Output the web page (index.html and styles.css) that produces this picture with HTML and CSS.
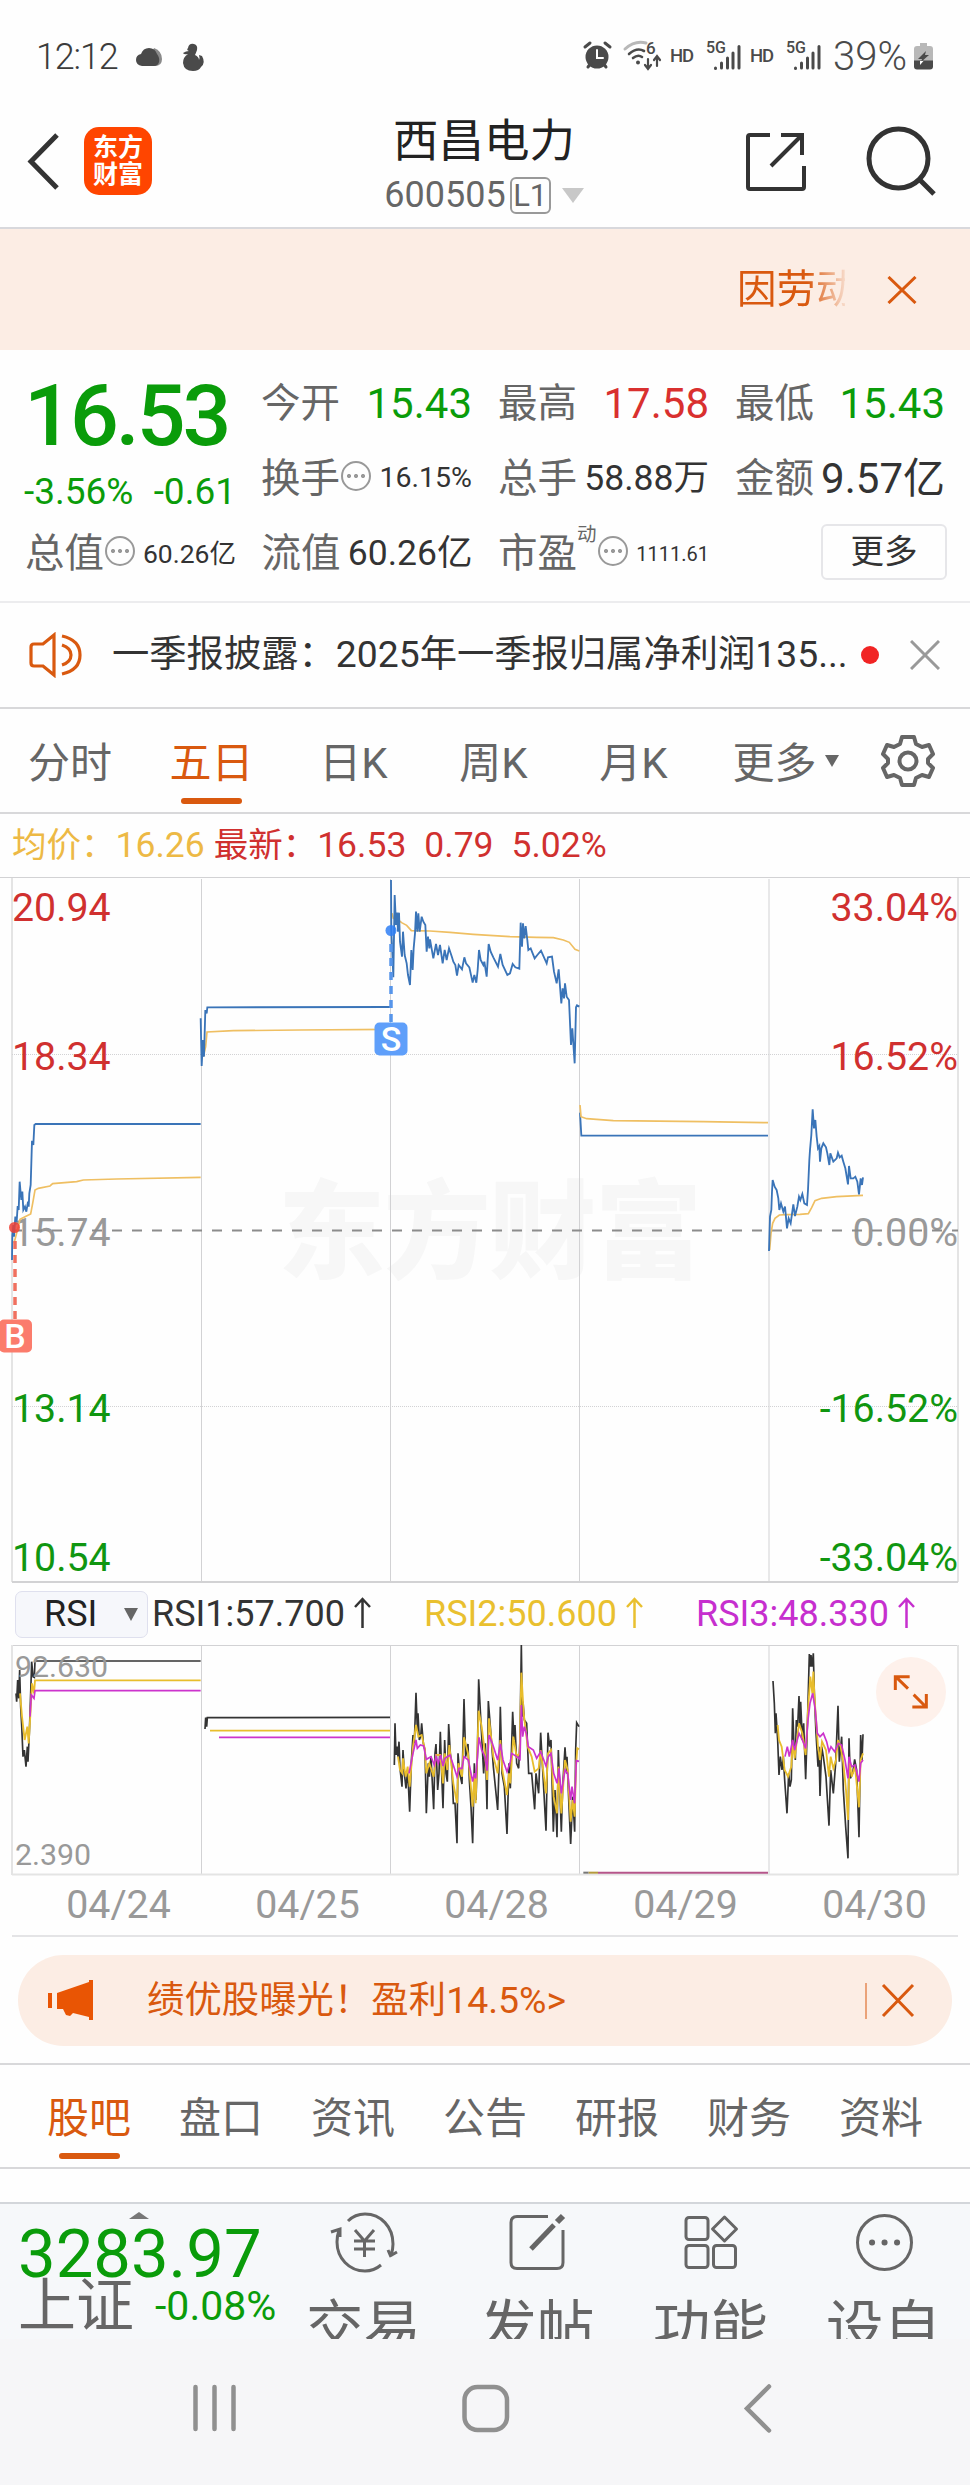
FILE: index.html
```html
<!DOCTYPE html>
<html lang="zh-CN">
<head>
    <meta charset="UTF-8">
    <meta name="viewport" content="width=device-width, initial-scale=1.0">
    <title>西昌电力 600505</title>
    <link rel="stylesheet" href="styles.css">
</head>
<body>
    <!-- Status bar -->
    <div class="status-bar">
        <span class="clock">12:12</span>
        <svg class="status-left" width="70" height="30" viewBox="0 0 70 30">
            <path d="M18 6q8 3 8 11q0 7-7 7h-9z" fill="#8a8a8a"/>
            <path d="M6 24q-6-1-6-6q0-5 5-6q2-6 8-6q6 0 8 6q3 4 2 8q-1 4-5 4z" fill="#4a4a4a"/>
            <path d="M52 6q1-5 6-4q4 1 3 6q-1 3-2 5q4 2 4 5q1-2 0-5l3 1q4 7-1 11q-2 4-8 4q-9 0-10-8q0-6 5-9q-4 1-5-1q3-2 6-2q-3-1-1-3z" fill="#4a4a4a"/>
        </svg>
        <div class="status-right">
            <svg width="374" height="40" viewBox="580 38 374 40">
                <g fill="none" stroke="#4a4a4a" stroke-width="3" stroke-linecap="round">
                    <circle cx="597" cy="58" r="11.5" fill="#4a4a4a" stroke="none"/>
                    <path d="M585 48l5-4M610 48l-5-4M588 68l3-4M606 68l-3-4"/>
                    <path d="M597 51v8h6" stroke="#fff" stroke-width="2"/>
                    <path d="M625 50q10-9 21-6" stroke="#b8b8b8"/>
                    <path d="M629 55q8-7 15-3M633 59q5-4 9-1" stroke-width="2.6"/>
                    <circle cx="638" cy="63.5" r="2" fill="#4a4a4a" stroke="none"/>
                    <path d="M648 60v9M645 66l3 4l3-4M657 67v-9M654 61l3-4l3 4" stroke-width="2.2"/>
                    <path d="M715.500 69v.5M721.500 64v5M727.500 59v10M733 54v15M739 47.500v21.500"/>
                    <path d="M795.500 69v.5M801.500 64v5M807.500 59v10M813 54v15M819 47.500v21.500"/>
                </g>
                <g class="status-text">
                    <text x="646" y="55" font-size="17">6</text>
                    <text x="670" y="62.500" font-size="18.500" textLength="24">HD</text>
                    <text x="706" y="54" font-size="16" textLength="20">5G</text>
                    <text x="750" y="62.500" font-size="18.500" textLength="24">HD</text>
                    <text x="786" y="54" font-size="16" textLength="20">5G</text>
                </g>
                <text class="battery-text" x="833" y="70.500">39%</text>
                <path d="M920 44h7v3h3q3 0 3 3v12h-19v-12q0-3 3-3h3z" fill="#b8b8b8"/>
                <path d="M914 61.500h19v6q0 3-3 3h-13q-3 0-3-3z" fill="#4a4a4a"/>
                <path d="M926 52l-8 8h4l-1 3l8-7h-4z" fill="#4a4a4a"/>
                <path d="M920 62h3.500l-3.500 4z" fill="#fff"/>
            </svg>
        </div>
    </div>

    <!-- Title -->
    <header class="header">
        <svg class="back" width="36" height="60" viewBox="0 0 36 60"><path d="M32 4L6 30.500L32 57" fill="none" stroke="#333" stroke-width="5"/></svg>
        <div class="logo"><span>东方</span><span>财富</span></div>
        <div class="stock">
            <h1>西昌电力</h1>
            <div class="code">600505<span class="level">L1</span><i class="tri-down"></i></div>
        </div>
        <svg class="header-icons" width="200" height="72" viewBox="740 124 200 72">
            <g fill="none" stroke="#333" stroke-width="4">
                <path d="M770 134h-20q-2 0-2 2v50q0 2 2 2h52q2 0 2-2v-21"/>
                <path d="M781 134h21v20M802 134l-31 31"/>
                <circle cx="898.500" cy="157.500" r="29.500" stroke-width="5"/>
                <path d="M919 178l15 15" stroke-width="5"/>
            </g>
        </svg>
    </header>

    <div class="notice">
        <span class="notice-text">因劳动</span>
        <svg width="30" height="28" viewBox="0 0 30 28"><path d="M1.500 1L28.500 27M28.500 1L1.500 27" stroke="#d9590f" stroke-width="3"/></svg>
    </div>

    <!-- Quote -->
    <section class="quote">
        <div class="price-box">
            <div class="price">16.53</div>
            <div class="change"><span>-3.56%</span><span>-0.61</span></div>
        </div>
        <div class="stats">
            <div class="stat"><label>今开</label><b class="green">15.43</b></div>
            <div class="stat"><label>最高</label><b class="red">17.58</b></div>
            <div class="stat"><label>最低</label><b class="green">15.43</b></div>
            <div class="stat"><label>换手</label><i class="dots"></i><b class="s28">16.15%</b></div>
            <div class="stat"><label>总手</label><b class="s35">58.88万</b></div>
            <div class="stat"><label>金额</label><b>9.57亿</b></div>
        </div>
        <div class="stats-bottom">
            <div class="stat"><label>总值</label><i class="dots"></i><b class="s26">60.26亿</b></div>
            <div class="stat"><label>流值</label><b class="s35">60.26亿</b></div>
            <div class="stat"><label>市盈</label><sup>动</sup><i class="dots"></i><b class="s20">1111.61</b></div>
            <button class="more">更多</button>
        </div>
    </section>

    <div class="news">
        <svg width="56" height="46" viewBox="0 0 56 46">
            <g fill="none" stroke="#d9590f" stroke-width="3.200">
                <path d="M5 12h9L25 3v40L14 34H5q-3 0-3-3V15q0-3 3-3z"/>
                <path d="M33 4q18 4 18 19t-18 19M33 13q9 3 9 10t-9 10"/>
            </g>
        </svg>
        <span class="news-text">一季报披露：2025年一季报归属净利润135...</span>
        <i class="red-dot"></i>
        <svg class="close" width="30" height="30" viewBox="0 0 30 30"><path d="M1 1L29 29M29 1L1 29" stroke="#999" stroke-width="3"/></svg>
    </div>

    <nav class="period">
        <span>分时</span>
        <span class="active">五日</span>
        <span>日K</span>
        <span>周K</span>
        <span>月K</span>
        <span class="period-more">更多<i></i></span>
        <svg width="54" height="54" viewBox="-27 -27 54 54">
            <g fill="none" stroke="#666" stroke-width="4" stroke-linejoin="round">
                <path d="M-6-24H6L8-17L14-14L21-16L25-7L20-2V2L25 7L21 16L14 14L8 17L6 24H-6L-8 17L-14 14L-21 16L-25 7L-20 2V-2L-25-7L-21-16L-14-14L-8-17Z"/>
                <circle r="8.500"/>
            </g>
        </svg>
    </nav>

    <div class="legend">
        <span class="avg">均价：<b>16.26</b></span><span class="last">最新：<b>16.53</b></span><b class="diff">0.79</b><b>5.02%</b>
    </div>

    <!-- Five day price chart -->
    <svg class="chart" width="970" height="706" viewBox="0 877 970 706">
        <text class="watermark" x="278" y="1270" textLength="424">东方财富</text>
        <g class="grid">
            <path d="M0 877.500H970"/>
            <path d="M12 878V1582M958 878V1582" stroke="#e4e4e4" stroke-width="2"/>
            <path d="M201.500 879V1582M390.500 879V1582M579.500 879V1582M769 879V1582"/>
            <path d="M12 1054.500H958M12 1406.500H958" stroke-dasharray="1 1"/>
            <path d="M12 1582H958" stroke-width="2"/>
        </g>
        <g class="axis">
            <text class="up" x="12" y="921">20.94</text>
            <text class="up" x="12" y="1070">18.34</text>
            <text class="flat" x="12" y="1246">15.74</text>
            <text class="down" x="12" y="1422">13.14</text>
            <text class="down" x="12" y="1571">10.54</text>
        </g>
        <g class="axis end">
            <text class="up" x="958" y="921">33.04%</text>
            <text class="up" x="958" y="1070">16.52%</text>
            <text class="flat" x="958" y="1246">0.00%</text>
            <text class="down" x="958" y="1422">-16.52%</text>
            <text class="down" x="958" y="1571">-33.04%</text>
        </g>
        <path d="M12 1230.500H958" stroke="#8c8c8c" stroke-width="2" stroke-dasharray="10 10"/>
        <!-- 04/24, 04/25 -->
        <g class="lines" transform="translate(0 870) scale(.33333)">
            <polyline class="avg-line" points="42,1120 55,1070 60,1048 75,1040 92,1032 98,1000 105,960 115,955 150,948 158,941 230,935 250,930 350,927 602,922"/>
            <polyline class="price-line" points="36,1170 37,1095 40,1065 42,1100 46,1040 50,1055 53,1008 56,1020 59,935 62,970 64,990 67,965 70,1020 75,1010 79,1025 84,995 86,1010 88,970 92,945 94,880 96,812 100,825 103,765 107,762 602,762"/>
            <polyline class="avg-line" points="610,560 617,530 621,486 700,482 900,480 1170,478"/>
            <polyline class="price-line" points="602,445 605,588 609,510 612,560 616,420 620,430 622,412 1171,411"/>
        </g>
        <!-- 04/28 -->
        <g class="lines" transform="translate(370 870) scale(.33333)">
            <polyline class="avg-line" points="66,130 70,145 85,150 95,158 110,166 124,182 180,183 240,187 310,193 420,200 500,202 550,203 580,210 598,217 615,238 628,243"/>
            <polyline class="price-line" points="63,30 64,180 70,322 74,75 78,165 81,128 84,185 87,128 90,215 96,260 99,185 104,255 110,280 114,315 120,345 124,240 128,300 131,235 135,190 138,125 142,185 145,130 149,185 155,140 160,155 166,165 170,245 174,200 178,235 180,208 190,265 198,222 204,255 210,225 218,280 224,240 230,270 237,235 246,262 250,275 256,285 261,317 266,285 276,298 283,262 288,280 298,292 308,338 313,315 319,338 323,300 327,240 332,270 340,285 343,275 350,320 356,222 362,245 370,262 384,290 391,252 398,285 412,315 420,310 428,282 436,292 448,296 452,158 456,230 459,160 463,205 467,168 472,210 475,240 482,235 494,265 502,255 513,242 530,280 534,262 546,260 552,305 560,340 566,298 574,400 578,355 582,385 585,340 590,380 597,390 603,525 607,475 614,580 618,412 621,406 628,410"/>
        </g>
        <!-- 04/29, 04/30 -->
        <g class="lines" transform="translate(570 870) scale(.33333)">
            <polyline class="price-line" points="30,728 34,797 594,797"/>
            <polyline class="avg-line" points="30,705 33,740 50,746 130,752 400,755 594,758"/>
            <polyline class="avg-line" points="599,1140 603,1090 608,1060 615,1045 628,1035 650,1034 690,1033 715,1031 725,1013 735,992 755,985 800,980 879,976"/>
            <polyline class="price-line" points="597,1143 600,1040 604,1020 606,965 608,930 614,950 620,960 625,985 628,1020 633,1000 640,1025 645,1010 651,1075 656,1045 662,1060 670,1003 675,1038 682,1010 687,980 691,990 697,972 703,1000 711,1005 714,960 718,870 720,840 724,795 728,718 732,775 736,750 740,800 744,835 748,828 750,875 754,835 760,820 768,832 772,850 778,885 781,850 790,875 800,865 804,848 809,862 815,857 820,875 826,895 834,943 837,888 842,925 850,925 856,920 862,935 867,973 872,925 876,945 879,922"/>
        </g>
        <!-- Buy / sell marks -->
        <circle cx="14.500" cy="1227.500" r="5.500" fill="#ee4034" opacity=".85"/>
        <path d="M15 1241V1319" stroke="#f0705f" stroke-width="3.500" stroke-dasharray="8 6"/>
        <rect x="-1" y="1319.500" width="33" height="33" rx="5" fill="#fb7c6c"/>
        <text class="mark" x="15" y="1348">B</text>
        <circle cx="391" cy="930.500" r="5.500" fill="#2f7ff5" opacity=".85"/>
        <path d="M391 944V1022" stroke="#5795ea" stroke-width="3.500" stroke-dasharray="8 6"/>
        <rect x="374.500" y="1022.500" width="33" height="33" rx="5" fill="#5f9ffa"/>
        <text class="mark" x="391" y="1051">S</text>
    </svg>

    <div class="rsi-head">
        <div class="rsi-select">RSI<i></i></div>
        <span class="rsi1">RSI1:57.700<svg width="17" height="32" viewBox="0 0 17 32"><path d="M8.500 31V2M1 10L8.500 2L16 10"/></svg></span>
        <span class="rsi2">RSI2:50.600<svg width="17" height="32" viewBox="0 0 17 32"><path d="M8.500 31V2M1 10L8.500 2L16 10"/></svg></span>
        <span class="rsi3">RSI3:48.330<svg width="17" height="32" viewBox="0 0 17 32"><path d="M8.500 31V2M1 10L8.500 2L16 10"/></svg></span>
    </div>

    <!-- RSI chart -->
    <svg class="chart" width="970" height="231" viewBox="0 1645 970 231">
        <g class="grid">
            <path d="M12 1645.500H958M201.500 1645V1875M390.500 1645V1875M579.500 1645V1875M769 1645V1875"/>
            <path d="M12 1645V1875M958 1645V1875M12 1874.500H958" stroke="#e4e4e4" stroke-width="2"/>
        </g>
        <g class="rsi-lines" transform="translate(0 1560) scale(.33333)">
            <polyline class="k" points="48,400 50,425 53,360 56,415 59,330 62,440 65,495 69,590 73,570 78,620 82,560 84,605 88,520 92,400 95,305 99,350 103,352 105,303 602,303"/>
            <polyline class="y" points="60,400 66,470 74,540 82,500 86,550 92,450 96,370 102,400 105,361 602,361"/>
            <polyline class="m" points="90,470 94,405 102,415 105,392 602,392"/>
            <polyline class="k" points="615,507 617,473 620,500 622,473 1170,472"/>
            <polyline class="y" points="630,512 1170,512"/>
            <polyline class="m" points="657,532 1170,532"/>
        </g>
        <g class="rsi-lines" transform="translate(385 1640) scale(.33333)">
            <polyline class="k" points="28,375 30,250 33,345 36,320 39,350 42,305 45,385 51,440 54,330 58,400 63,445 68,390 74,515 79,365 84,285 88,310 93,158 97,270 99,220 103,300 107,290 110,250 115,310 120,330 124,520 130,370 133,410 138,350 146,508 150,340 153,312 158,450 162,400 166,275 170,400 174,505 179,300 183,400 187,425 191,252 196,340 200,370 205,490 210,490 216,610 219,340 224,400 231,432 237,177 242,350 249,312 253,420 258,500 263,610 268,370 273,480 277,350 281,118 288,250 296,400 301,310 306,508 310,183 316,260 325,380 338,510 343,350 346,200 351,400 358,440 366,582 372,370 376,445 383,215 387,300 390,255 395,370 401,385 405,300 409,15 412,230 414,185 418,240 425,250 431,400 440,400 449,508 453,400 461,460 467,278 472,370 483,572 489,278 494,320 498,300 505,575 510,450 516,592 520,330 529,575 533,440 540,322 545,400 546,350 552,500 557,612 563,470 569,575 572,330 575,248 582,260"/>
            <polyline class="y" points="39,350 45,390 52,400 54,355 62,410 68,380 74,440 84,320 93,255 100,290 110,285 120,330 124,400 133,370 146,410 153,345 166,345 174,430 179,340 187,390 193,315 205,430 216,490 220,370 231,410 237,292 249,340 263,500 268,400 272,490 281,212 290,260 300,340 306,420 312,235 325,350 338,400 346,300 352,390 366,465 372,400 376,430 385,290 395,350 404,340 409,98 416,220 428,320 440,350 449,395 461,385 467,330 483,460 489,340 498,330 506,470 516,520 520,380 529,520 540,360 548,390 557,545 563,480 569,530 573,380 577,325 582,328"/>
            <polyline class="m" points="72,400 78,370 84,340 93,300 97,325 106,315 116,318 124,358 138,350 148,375 153,350 160,370 167,345 174,378 180,355 195,345 208,385 216,410 222,385 231,385 237,350 250,360 263,425 268,400 272,415 282,292 290,330 300,350 306,392 312,285 322,310 338,360 346,312 354,360 366,395 376,365 380,340 395,350 405,358 409,195 413,290 418,260 424,280 430,320 445,330 455,355 467,335 483,378 490,350 498,340 506,400 516,430 522,385 529,460 540,390 548,400 557,480 561,440 569,490 574,362 582,364"/>
        </g>
        <g class="rsi-lines" transform="translate(480 1560) scale(.33333)">
            <path d="M310 938H326" stroke="#777" stroke-width="6"/>
            <path d="M326 938H354" stroke="#b59a3c" stroke-width="6"/>
            <path d="M354 938H864" stroke="#b5568a" stroke-width="6"/>
            <polyline class="k" points="879,363 883,430 886,520 888,460 893,540 897,645 901,590 906,630 910,590 914,660 921,760 926,640 930,680 934,660 938,445 942,560 946,600 949,480 953,500 957,408 960,500 962,425 967,540 971,490 977,658 982,500 988,282 991,320 993,285 996,320 1000,280 1003,400 1008,520 1014,620 1017,560 1020,708 1025,560 1030,590 1038,650 1047,797 1052,630 1060,700 1067,610 1074,437 1078,605 1085,530 1090,690 1097,800 1104,895 1107,535 1111,655 1118,640 1124,598 1130,630 1137,832 1142,525 1146,600 1149,523"/>
            <polyline class="y" points="893,495 897,540 905,560 914,630 924,650 934,620 938,545 944,595 957,490 967,520 977,585 984,450 991,350 997,400 1000,335 1004,420 1014,560 1020,600 1026,545 1038,570 1047,650 1052,590 1060,625 1068,600 1074,540 1082,560 1090,610 1098,690 1104,780 1108,600 1115,650 1125,620 1137,742 1142,600 1149,580"/>
            <polyline class="m" points="915,590 922,560 928,590 938,540 944,570 957,520 967,540 977,565 984,480 990,430 998,400 1006,450 1012,520 1020,530 1030,520 1040,545 1047,575 1053,560 1064,575 1075,550 1085,555 1095,600 1104,655 1107,590 1115,620 1125,615 1137,665 1142,610 1149,600"/>
            <circle cx="1293" cy="396" r="105" fill="#fef1eb"/>
            <path d="M1284 386L1247 350M1246 390V350H1289M1301 404L1338 441M1297 441H1339V402" stroke="#d9590f" stroke-width="9"/>
        </g>
        <text class="rsi-axis" x="15" y="1677">92.630</text>
        <text class="rsi-axis" x="15" y="1865">2.390</text>
    </svg>

    <div class="dates">
        <span>04/24</span><span>04/25</span><span>04/28</span><span>04/29</span><span>04/30</span>
    </div>

    <div class="promo">
        <svg width="48" height="42" viewBox="0 0 48 42">
            <path d="M0 13h4v15H0zM9 13L41 2V0h4v40h-4v-3L25 33l-3 3l-4-1l-3-6H9z" fill="#e95504"/>
        </svg>
        <span class="promo-text">绩优股曝光！盈利14.5%&gt;</span>
        <svg class="promo-close" width="50" height="38" viewBox="0 0 50 38">
            <path d="M1 1V37" stroke="#d9590f"/>
            <path d="M18 3L48 34M48 3L18 34" stroke="#d9590f" stroke-width="3"/>
        </svg>
    </div>

    <nav class="sections">
        <span class="active">股吧</span>
        <span>盘口</span>
        <span>资讯</span>
        <span>公告</span>
        <span>研报</span>
        <span>财务</span>
        <span>资料</span>
    </nav>

    <footer class="bottom">
        <div class="index">
            <i class="tri-up"></i>
            <div class="index-value">3283.97</div>
            <div class="index-row"><span>上证</span><b>-0.08%</b></div>
        </div>
        <div class="action">
            <svg width="70" height="62" viewBox="329 2211 70 62">
                <path d="M348 2221q7-7 17-7c16 0 28 13 28 30q0 6-2 11M391 2257l-3-7M390 2256l7-4M381 2265q-7 6-16 6c-16 0-28-13-28-29q0-6 2-12M331 2232l9-3v8"/>
                <path d="M355 2230l9.500 11l9.500-11M364.500 2241v16M354 2241h21M354 2249h21"/>
            </svg>
            <span>交易</span>
        </div>
        <div class="action">
            <svg width="60" height="62" viewBox="507 2211 60 62">
                <path d="M548 2216.500H517q-6 0-6 6v40q0 6 6 6h40q6 0 6-6V2230"/>
                <path d="M531 2249L554 2225" stroke-width="5"/>
                <path d="M557 2222l6-6" stroke-width="6"/>
            </svg>
            <span>发帖</span>
        </div>
        <div class="action">
            <svg width="60" height="62" viewBox="681 2211 60 62">
                <rect x="686" y="2217.500" width="22" height="22" rx="3"/>
                <rect x="686" y="2245.500" width="22" height="22" rx="3"/>
                <rect x="713.500" y="2245.500" width="22" height="22" rx="3"/>
                <path d="M724.500 2217l12 12l-12 12l-12-12z" stroke-linejoin="round"/>
            </svg>
            <span>功能</span>
        </div>
        <div class="action">
            <svg width="62" height="62" viewBox="852 2211 62 62">
                <circle cx="883.500" cy="2242.500" r="27"/>
                <path d="M871 2242.500h.1M883.500 2242.500h.1M896 2242.500h.1" stroke-width="6" stroke-linecap="round"/>
            </svg>
            <span>设自</span>
        </div>
    </footer>

    <div class="sys-nav">
        <svg width="970" height="60" viewBox="0 2378 970 60">
            <g fill="none" stroke="#909090" stroke-width="4.500" stroke-linecap="round">
                <path d="M195.500 2387V2429M214.500 2387V2429M233.500 2387V2429"/>
                <rect x="464.500" y="2387" width="42.500" height="43" rx="13"/>
                <path d="M769 2386.500L747 2408.500L769 2430.500"/>
            </g>
        </svg>
    </div>
</body>
</html>
```

FILE: styles.css
```css
* {
    box-sizing: border-box;
}

body {
    margin: 0;
    width: 970px;
    height: 2485px;
    overflow: hidden;
    background: #fefefe;
    color: #333;
    font-family: Roboto, "Noto Sans CJK SC", sans-serif;
    line-height: 1;
}

svg {
    display: block;
    flex: none;
}

i {
    font-style: normal;
}

.green {
    color: #0a9c0a;
}

.red {
    color: #d9302f;
}

/* Status bar */
.status-bar {
    display: flex;
    align-items: center;
    height: 114px;
    padding: 0 16px 0 36px;
}

.clock {
    width: 99px;
    font-size: 36px;
    font-weight: 300;
    letter-spacing: -1.2px;
    color: #3c3c3c;
}

.status-left {
    margin-left: 1px;
}

.status-right {
    margin-left: auto;
}

.status-text {
    fill: #4a4a4a;
    font-weight: 500;
}

.battery-text {
    fill: #4a4a4a;
    font-size: 40px;
    font-weight: 300;
}

/* Title */
.header {
    display: flex;
    align-items: center;
    height: 115px;
    padding: 0 30px 20px 25px;
    border-bottom: 2px solid #d8d8dc;
}

.back {
    margin-right: 23px;
}

.logo {
    display: flex;
    flex-direction: column;
    justify-content: center;
    gap: 2px;
    width: 68px;
    height: 68px;
    border-radius: 15px;
    background: #ff4500;
    color: #fff;
    font-size: 25px;
    font-weight: 700;
    text-align: center;
}

.stock {
    flex: 1;
    display: flex;
    flex-direction: column;
    align-items: center;
    padding: 11px 0 0 76px;
}

.stock h1 {
    margin: 0;
    font-size: 45.500px;
    font-weight: 400;
    color: #222;
}

.code {
    display: flex;
    align-items: center;
    margin-top: 13px;
    height: 36px;
    font-size: 36px;
    color: #666;
}

.level {
    width: 41px;
    height: 37px;
    margin-left: 4px;
    border: 2px solid #999;
    border-radius: 6px;
    font-size: 31px;
    line-height: 34px;
    text-align: center;
}

.tri-down {
    margin-left: 11px;
    border: 11px solid transparent;
    border-top: 15px solid #c8c8c8;
    border-bottom: 0;
}

/* Orange notice */
.notice {
    display: flex;
    align-items: center;
    height: 121px;
    padding: 0 53px 0 737px;
    background: #fcede4;
}

.notice-text {
    width: 108px;
    margin-right: 42px;
    overflow: hidden;
    white-space: nowrap;
    font-size: 39.500px;
    line-height: 50px;
    color: #d9590f;
    -webkit-mask-image: linear-gradient(to right, #000 65%, transparent 105%);
    mask-image: linear-gradient(to right, #000 65%, transparent 105%);
}

/* Quote */
.quote {
    display: grid;
    grid-template-columns: 236px 1fr;
    grid-template-rows: 150px 76px;
    column-gap: 25px;
    height: 253px;
    padding: 16px 25px 0 0;
    border-bottom: 2px solid #ececee;
}

.price-box {
    padding: 7px 0 0 24px;
    color: #0a9c0a;
}

.price {
    height: 86px;
    font-size: 86px;
    font-weight: 500;
    letter-spacing: -3px;
    line-height: 86px;
}

.change {
    display: flex;
    justify-content: space-between;
    padding: 14px 0 0;
    font-size: 37px;
}

.stats {
    display: grid;
    grid-template-columns: 211px 211px 210px;
    column-gap: 26px;
    grid-auto-rows: 75px;
}

.stats-bottom {
    grid-column: 1 / 3;
    display: grid;
    grid-template-columns: 211px 211px 211px 1fr;
    column-gap: 25.500px;
    height: 76px;
    padding-left: 25px;
}

.stat {
    display: flex;
    align-items: center;
    white-space: nowrap;
}

.stat label {
    font-size: 39.500px;
    color: #666;
}

.stat b {
    margin-left: auto;
    font-size: 42px;
    font-weight: 400;
}

.stat .s35 {
    font-size: 35.500px;
}

.stat .s28 {
    font-size: 28.500px;
}

.stat .s26 {
    font-size: 26.500px;
}

.stat .s20 {
    font-size: 20px;
}

.stat sup {
    align-self: flex-start;
    margin-top: 9px;
    font-size: 19.500px;
    color: #666;
}

.dots {
    width: 30px;
    height: 30px;
    margin: 0 0 6px 1px;
    border: 2px solid #999;
    border-radius: 50%;
    background:
        radial-gradient(circle at 6px 13px, #999 1.800px, transparent 2.300px),
        radial-gradient(circle at 13px 13px, #999 1.800px, transparent 2.300px),
        radial-gradient(circle at 20px 13px, #999 1.800px, transparent 2.300px);
}

.more {
    width: 126px;
    height: 56px;
    margin: 8px -2px 0 auto;
    padding: 0;
    border: 2px solid #e6e6e9;
    border-radius: 6px;
    background: #fefefe;
    color: #333;
    font: 33.500px Roboto, "Noto Sans CJK SC", sans-serif;
    line-height: 44px;
}

/* News line */
.news {
    display: flex;
    align-items: center;
    height: 106px;
    padding-left: 29px;
    border-bottom: 2px solid #d8d8da;
}

.news-text {
    width: 738px;
    margin-left: 27px;
    font-size: 37.300px;
    white-space: nowrap;
}

.red-dot {
    width: 18px;
    height: 18px;
    margin-left: 11px;
    border-radius: 50%;
    background: #f12424;
}

.news .close {
    margin-left: 31px;
}

/* Period tabs */
.period {
    display: grid;
    grid-template-columns: 140px 143px 141px 139px 141px 142px 1fr;
    align-items: center;
    justify-items: center;
    height: 105px;
    padding-top: 6px;
    border-bottom: 2px solid #d8d8da;
    font-size: 42px;
    color: #666;
}

.period svg {
    margin-bottom: 6px;
}

.period-more {
    display: flex;
    align-items: center;
    margin-right: -21px;
}

.period-more i {
    margin: 0 0 6px 8px;
    border: 7.500px solid transparent;
    border-top: 12px solid #666;
    border-bottom: 0;
}

.active {
    position: relative;
    color: #d9590f;
}

.active::after {
    content: '';
    position: absolute;
    left: 50%;
    top: 55px;
    width: 61px;
    height: 6px;
    margin-left: -30px;
    border-radius: 3px;
    background: #d9590f;
}

.legend {
    display: flex;
    align-items: center;
    height: 63px;
    padding-left: 12px;
    font-size: 34.500px;
    color: #d0302f;
}

.legend b {
    font-size: 35.500px;
    font-weight: 400;
}

.avg {
    color: #edb945;
    margin-right: 9px;
}

.last,
.diff {
    margin-right: 18px;
}

/* Charts */
.grid path {
    fill: none;
    stroke: #d2d2d4;
}

.grid path[stroke] {
    stroke: #e4e4e4;
}

.axis {
    font-size: 39.300px;
}

.end {
    text-anchor: end;
}

.up {
    fill: #d0302f;
}

.flat {
    fill: #999;
}

.down {
    fill: #109610;
}

.watermark {
    font-size: 107px;
    font-weight: 900;
    fill: #f7f7f7;
}

.lines polyline,
.rsi-lines polyline,
.rsi-lines path {
    fill: none;
}

.price-line {
    stroke: #3a74b8;
    stroke-width: 5.500;
}

.avg-line {
    stroke: #efbf62;
    stroke-width: 5;
}

.mark {
    fill: #fff;
    font-size: 34px;
    font-weight: 500;
    text-anchor: middle;
}

.k {
    stroke: #333;
    stroke-width: 5;
}

.y {
    stroke: #e8bd2c;
    stroke-width: 5.500;
}

.m {
    stroke: #cc33cc;
    stroke-width: 5;
}

.rsi-axis {
    font-size: 30.300px;
    fill: #999;
}

.rsi-head {
    display: grid;
    grid-template-columns: 133px 272px 272px 1fr;
    align-items: center;
    height: 62px;
    padding-left: 15px;
    font-size: 36px;
}

.rsi-head span {
    display: flex;
    align-items: center;
    padding-left: 4px;
}

.rsi-head span svg {
    margin: 0 0 2px 9px;
    fill: none;
    stroke: currentColor;
    stroke-width: 2.500;
}

.rsi-select {
    display: flex;
    align-items: center;
    height: 47px;
    padding-left: 28px;
    border: 1px solid #dfe0ee;
    border-radius: 7px;
    background: #f6f7fb;
    color: #222;
}

.rsi-select i {
    margin-left: 27px;
    border: 7.500px solid transparent;
    border-top: 13px solid #666;
    border-bottom: 0;
}

.rsi2 {
    color: #e9c02f;
}

.rsi3 {
    color: #c62fce;
}

.dates {
    display: grid;
    grid-template-columns: repeat(5, 189px);
    align-items: center;
    height: 61px;
    margin: 0 12px;
    padding-left: 12px;
    border-bottom: 2px solid #e4e4e6;
    color: #999;
    font-size: 39.300px;
    text-align: center;
}

/* Promo pill */
.promo {
    display: flex;
    align-items: center;
    height: 91px;
    margin: 18px 18px 17px;
    padding: 0 37px 0 30px;
    border-radius: 46px;
    background: #fcede4;
    color: #d9590f;
    font-size: 37.400px;
}

.promo-text {
    margin-left: 51px;
}

.promo-close {
    margin-left: auto;
}

/* Section tabs */
.sections {
    display: grid;
    grid-template-columns: repeat(7, 132px);
    align-items: center;
    justify-items: center;
    height: 106px;
    padding: 6px 0 0 23px;
    border-top: 2px solid #d8d8da;
    border-bottom: 2px solid #d8d8da;
    font-size: 42px;
    color: #666;
}

/* Bottom bar */
.bottom {
    display: grid;
    grid-template-columns: 277px 173px 174px 173px 173px;
    height: 137px;
    margin-top: 33px;
    border-top: 2px solid #d3d6da;
    background: #f6f8fa;
    overflow: hidden;
}

.index {
    padding: 8px 0 0 18px;
}

.tri-up {
    display: block;
    width: 0;
    margin-left: 111px;
    border: 10px solid transparent;
    border-top: 0;
    border-bottom: 7px solid #777;
}

.index-value {
    margin-top: 2px;
    font-size: 67px;
    color: #0a9c0a;
}

.index-row {
    display: flex;
    align-items: center;
    margin-top: -11px;
    white-space: nowrap;
    font-size: 58px;
    color: #666;
}

.index-row b {
    margin-left: 21px;
    font-size: 41px;
    font-weight: 400;
    color: #0a9c0a;
}

.action {
    display: flex;
    flex-direction: column;
    align-items: center;
    padding-top: 7px;
    color: #666;
    font-size: 57.500px;
}

.action svg {
    fill: none;
    stroke: #666;
    stroke-width: 3;
}

.action span {
    margin-top: 27px;
}

/* System navigation */
.sys-nav {
    height: 146px;
    padding-top: 39px;
    background: #f6f6f8;
}
```
